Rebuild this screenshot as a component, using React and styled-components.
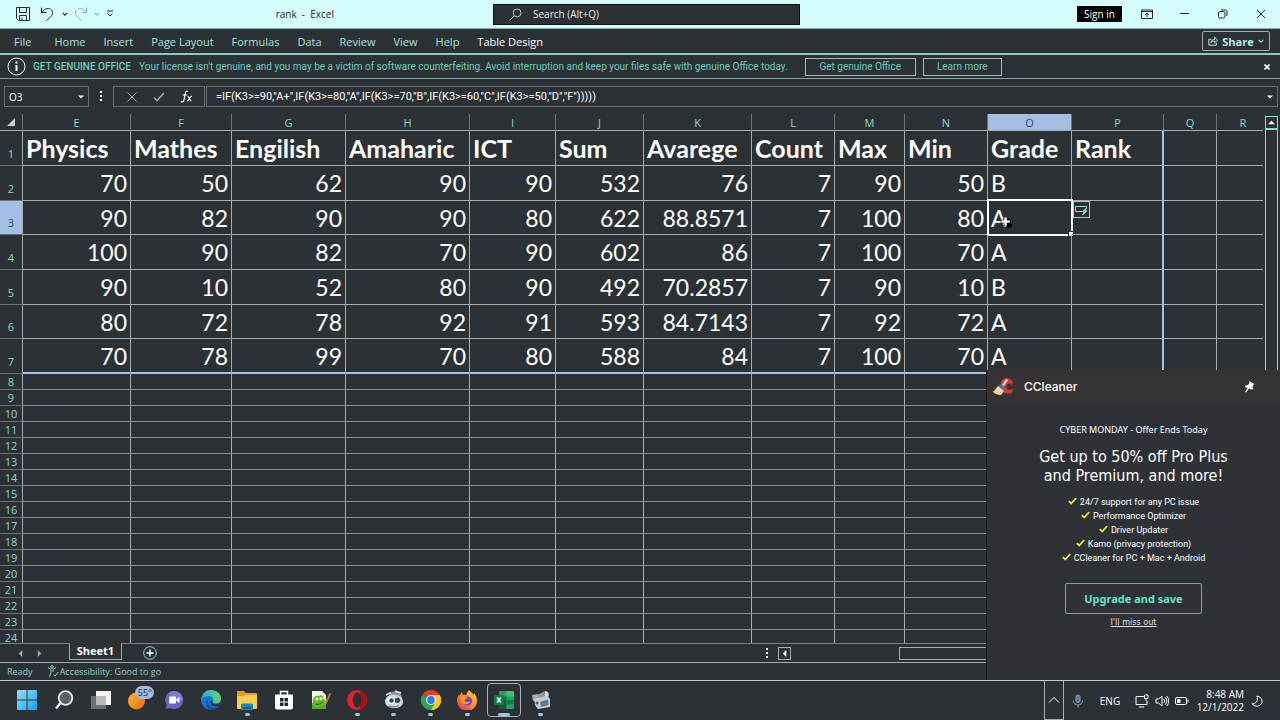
import React from 'react';
import styled, { createGlobalStyle } from 'styled-components';

const mint = '#8fd9c8';
const dark = '#2c3136';
const line = '#a4acae';
const accent = '#a3c0e4';

const GlobalStyle = createGlobalStyle`
  * {
    box-sizing: border-box;
  }
  body {
    margin: 0;
    background: ${dark};
    color: #fff;
    font-family: 'Open Sans', 'Noto Sans', sans-serif;
    font-size: 11px;
  }
  button, input {
    font: inherit;
    color: inherit;
    background: none;
    border: 0;
    padding: 0;
    margin: 0;
    border-radius: 0;
  }
  button {
    display: flex;
    align-items: center;
    justify-content: center;
  }
`;

const Window = styled.div`
  height: 100vh;
  display: flex;
  flex-direction: column;
  overflow: hidden;
`;

/* ---------- title bar ---------- */

const TitleBar = styled.header`
  flex: none;
  height: 29px;
  display: grid;
  grid-template-columns: 493fr 307px 480fr;
  align-items: center;
  background: #d6fdfd;
  border-bottom: 1px solid #7fb5ae;
  color: #23282c;

  .TitleBar__side {
    display: flex;
    align-items: center;
    height: 100%;
  }
  .TitleBar__side--right {
    justify-content: flex-end;
  }
`;

const QuickAccess = styled.div`
  display: flex;
  align-items: center;
  padding-left: 15px;
  flex: 1;
`;

const QuickButton = styled.button`
  width: ${({ $width }) => $width}px;
  height: 20px;
  opacity: ${({ $faded }) => ($faded ? 0.35 : 1)};
`;

const DocTitle = styled.span`
  padding-right: 159px;
  font-size: 10px;
  white-space: pre;
`;

const SearchBox = styled.label`
  display: flex;
  align-items: center;
  height: 21px;
  padding-left: 15px;
  gap: 11px;
  background: ${dark};
  border: 1px solid #111;
  color: #e8eaea;

  input {
    flex: 1;
    min-width: 0;
    font-size: 10px;
    outline: 0;
  }
  input::placeholder {
    color: #e8eaea;
    opacity: 1;
  }
`;

const SignIn = styled.button`
  width: 45px;
  height: 16px;
  margin-right: 6px;
  background: #000;
  color: #fff;
  font-size: 10px;
`;

const WindowButton = styled.button`
  width: 38px;
  height: 28px;
`;

/* ---------- ribbon ---------- */

const Ribbon = styled.nav`
  flex: none;
  height: 26px;
  display: flex;
  align-items: center;
  gap: 18px;
  padding: 0 10px 0 14px;
  border-bottom: 2px solid #8fc9be;
`;

const RibbonTab = styled.button`
  height: 22px;
  color: ${({ $active }) => ($active ? '#fff' : '#a5e3d6')};
  margin-right: ${({ $wide }) => ($wide ? 5 : 0)}px;
`;

const ShareButton = styled.button`
  width: 68px;
  height: 20px;
  gap: 4px;
  margin-left: auto;
  border: 1px solid ${line};
  border-radius: 2px;
  color: #b5efe2;
  font-weight: 700;
`;

const Notice = styled.section`
  flex: none;
  height: 24px;
  display: flex;
  align-items: center;
  padding: 0 8px 0 7px;
  border-bottom: 1px solid #74a79f;
  color: #6cccb9;
  font-family: Roboto, sans-serif;
  font-size: 10px;
  white-space: nowrap;

  strong {
    font-weight: 500;
    margin: 0 8px 0 7px;
  }
  p {
    margin: 0 17px 0 0;
  }
`;

const NoticeButton = styled.button`
  width: ${({ $width }) => $width}px;
  height: 18px;
  margin-right: 7px;
  border: 1px solid #b0b6b8;
`;

const NoticeClose = styled.button`
  width: 10px;
  height: 18px;
  margin-left: auto;
`;

/* ---------- formula bar ---------- */

const FormulaBar = styled.div`
  flex: none;
  height: 35px;
  display: flex;
  align-items: flex-start;
  padding: 7px 2px 0 4px;
  font-size: 10px;
`;

const BarBox = styled.div`
  display: flex;
  align-items: center;
  height: 21px;
  min-width: 0;
  width: ${({ $width }) => ($width ? `${$width}px` : 'auto')};
  flex: ${({ $width }) => ($width ? 'none' : '1')};
  margin-right: ${({ $gap }) => $gap || 0}px;
  padding: 0 4px;
  border: 1px solid #666b6f;

  input {
    flex: 1;
    min-width: 0;
    outline: 0;
  }
`;

const FormulaInput = styled.input`
  padding-left: 5px;
  font-family: Roboto, sans-serif;
  font-size: 11px;
`;

const FormulaButton = styled.button`
  flex: 1;
  height: 19px;
  color: ${({ $muted }) => ($muted ? '#a5a9ab' : '#fff')};
`;

const Grip = styled.span`
  width: 24px;
  height: 21px;
  display: flex;
  align-items: center;
  justify-content: center;
`;

/* ---------- sheet ---------- */

const SheetArea = styled.main`
  flex: 1;
  min-height: 0;
  display: flex;
  overflow: hidden;
`;

const SheetClip = styled.div`
  flex: 1;
  min-width: 0;
  overflow: hidden;
`;

const Sheet = styled.table`
  width: 0;
  min-width: 100%;
  table-layout: fixed;
  border-collapse: separate;
  border-spacing: 0;
`;

const ColumnHead = styled.th`
  height: 17px;
  padding: 1px 0 0;
  line-height: 15px;
  font-size: 11px;
  font-weight: 400;
  color: ${({ $selected }) => ($selected ? '#2f4664' : mint)};
  background: ${({ $selected }) => ($selected ? accent : 'none')};
  border-right: 1px solid #6b7175;
  border-bottom: 1px solid ${line};
`;

const RowHead = styled.th`
  padding: 0 0 ${({ $height }) => ($height > 20 ? 4 : 0)}px;
  height: ${({ $height }) => $height}px;
  line-height: 14px;
  font-size: 11px;
  font-weight: 400;
  vertical-align: bottom;
  color: ${({ $selected }) => ($selected ? '#2f4664' : mint)};
  background: ${({ $selected }) => ($selected ? accent : 'none')};
  border-right: 1px solid ${line};
  border-bottom: 1px solid #6b7175;
`;

const Cell = styled.td`
  position: relative;
  padding: 0 3px;
  overflow: visible;
  line-height: 30px;
  font-family: Lato, sans-serif;
  font-size: ${({ $bold }) => ($bold ? 25 : 23)}px;
  font-weight: ${({ $bold }) => ($bold ? 700 : 400)};
  text-align: ${({ $number }) => ($number ? 'right' : 'left')};
  white-space: nowrap;
  border-right: ${({ $tableRight }) => ($tableRight ? `2px solid ${accent}` : `1px solid ${line}`)};
  border-bottom: ${({ $tableBottom }) => ($tableBottom ? `2px solid ${accent}` : `1px solid ${line}`)};
`;

const BlankCell = styled.td`
  padding: 0;
  border-right: 1px solid ${line};
  border-bottom: 1px solid #888f92;
`;

const Selection = styled.span`
  position: absolute;
  inset: -2px -2px -2px -1px;
  border: 2px solid #fff;
  pointer-events: none;

  &::after {
    content: '';
    position: absolute;
    right: -3px;
    bottom: -3px;
    width: 4px;
    height: 4px;
    background: #fff;
    border: 1px solid ${dark};
  }
`;

const QuickAnalysis = styled.button`
  position: absolute;
  left: 100%;
  top: 0;
  width: 17px;
  height: 17px;
  margin-left: 2px;
  border: 1px solid ${mint};
  background: ${dark};
`;

const Cursor = styled.svg`
  position: absolute;
  left: 12px;
  top: 15px;
`;

const VerticalScroll = styled.div`
  flex: none;
  width: 13px;
  margin: 2px 2px 0;
  display: flex;
  flex-direction: column;

  button {
    height: 13px;
    border: 1px solid ${mint};
  }
  div {
    flex: 1;
    border: 1px solid ${mint};
  }
`;

/* ---------- sheet tabs and status ---------- */

const TabStrip = styled.div`
  flex: none;
  height: 20px;
  display: flex;
  align-items: flex-start;
  border-top: 1px solid #7b8286;
  border-bottom: 1px solid ${line};
`;

const TabArrows = styled.div`
  width: 69px;
  height: 18px;
  display: flex;
  align-items: center;
  gap: 12px;
  padding-left: 17px;
  color: #a5a9ab;
`;

const SheetTab = styled.button`
  width: 53px;
  height: 17px;
  margin-top: -1px;
  padding-bottom: 2px;
  background: ${dark};
  border: 1px solid #8fa9c4;
  border-top: 0;
  font-weight: 700;
`;

const AddSheet = styled.button`
  height: 18px;
  margin-left: 21px;
`;

const HorizontalScroll = styled.div`
  display: flex;
  align-items: center;
  height: 18px;
  margin-left: auto;
  width: 514px;
  gap: 9px;

  button {
    width: 13px;
    height: 13px;
    border: 1px solid ${line};
  }
  div {
    height: 13px;
    flex: 1;
    margin: 0 20px 0 99px;
    border: 1px solid ${line};
  }
`;

const StatusBar = styled.footer`
  flex: none;
  height: 18px;
  display: flex;
  align-items: center;
  padding: 0 0 1px 7px;
  border-bottom: 1px solid #c5cacb;
  color: #8fd0c2;
  font-size: 9px;

  svg {
    margin: 0 1px 0 14px;
  }
`;

/* ---------- taskbar ---------- */

const Taskbar = styled.div`
  flex: none;
  height: 39px;
  display: flex;
  justify-content: space-between;
`;

const Apps = styled.div`
  width: 550px;
  margin-left: 9px;
  padding-bottom: 2px;
  display: grid;
  grid-template-columns: repeat(15, 1fr);
  align-items: center;
  justify-items: center;
`;

const AppButton = styled.button`
  position: relative;
  width: 34px;
  height: 34px;
  border: 1px solid ${({ $active }) => ($active ? '#a9afb2' : 'transparent')};
  border-radius: 4px;

  &::after {
    content: '';
    display: ${({ $running }) => ($running ? 'block' : 'none')};
    position: absolute;
    bottom: 0;
    width: ${({ $active }) => ($active ? 12 : 5)}px;
    height: 3px;
    border-radius: 2px;
    background: #a9bfdc;
  }
`;

const Temperature = styled.span`
  position: absolute;
  right: -1px;
  top: 2px;
  width: 19px;
  height: 13px;
  line-height: 13px;
  border-radius: 7px;
  background: #9dbbe0;
  color: #1d2b45;
  font-size: 9px;
`;

const Tray = styled.div`
  display: flex;
  align-items: center;
  padding-right: 17px;
`;

const TrayToggle = styled.button`
  width: 20px;
  height: 100%;
  margin-right: 7px;
  border: 1px solid ${line};
  border-top: 0;
`;

const TrayItem = styled.button`
  width: ${({ $width }) => $width}px;
  height: 30px;
  font-size: 10px;
`;

const Clock = styled.time`
  width: 55px;
  font-size: 10px;
  line-height: 13px;
  text-align: right;
  margin-right: 7px;
`;

/* ---------- CCleaner offer ---------- */

const Offer = styled.aside`
  position: absolute;
  right: 0;
  bottom: 40px;
  width: 294px;
  height: 310px;
  background: #2e3237;
  border-left: 1px solid #14181a;
  text-align: center;
  font-family: 'DejaVu Sans Condensed', 'Noto Sans', sans-serif;
  font-size: 9px;
`;

const OfferHeader = styled.header`
  display: flex;
  align-items: center;
  gap: 9px;
  height: 33px;
  padding: 0 25px 0 6px;
  background: #373334;
  font-family: Inter, sans-serif;
  font-size: 12px;
  font-weight: 500;

  button {
    margin-left: auto;
  }
`;

const OfferLead = styled.p`
  margin: 20px 0 0;
  font-family: 'Noto Sans', sans-serif;
  line-height: 14px;
`;

const OfferTitle = styled.h2`
  margin: 10px 0;
  font-size: 16px;
  line-height: 19px;
  font-weight: 400;
`;

const OfferList = styled.ul`
  margin: 0;
  padding: 0;
  list-style: none;
  font-family: Roboto, sans-serif;
  line-height: 14px;

  svg {
    margin-right: 3px;
  }
`;

const UpgradeButton = styled.button`
  width: 137px;
  height: 31px;
  margin: 18px auto 0;
  border: 1px solid #62ad9f;
  border-radius: 2px;
  color: #63e3c8;
  font-family: 'Noto Sans', sans-serif;
  font-size: 11px;
  font-weight: 700;
`;

const MissOut = styled.a`
  color: #e8dfe6;
  line-height: 16px;
`;

/* ---------- icons ---------- */

const Stroke = ({ size = 16, box = 16, width = 1, children }) => (
  <svg width={size} height={size} viewBox={`0 0 ${box} ${box}`} fill='none' stroke='currentColor' strokeWidth={width}>
    {children}
  </svg>
);

const Caret = ({ size = 6 }) => (
  <Stroke size={size} box={8} width={1.5}>
    <path d='M1 2.5l3 3 3-3' />
  </Stroke>
);

const Triangle = ({ d, size = 8 }) => (
  <svg width={size} height={size} viewBox='0 0 8 8' fill='currentColor'>
    <path d={d} />
  </svg>
);

const Dots = () => (
  <svg width='3' height='11' viewBox='0 0 3 11' fill='#fff'>
    <path d='M0 0h2v2H0zM0 4h2v2H0zM0 8h2v2H0z' />
  </svg>
);

const Tick = () => (
  <svg width='9' height='8' viewBox='0 0 9 8' fill='none' stroke='#f3e52c' strokeWidth='1.8'>
    <path d='M.8 4.2l2.4 2.3L8.2 1' />
  </svg>
);

const appIcons = {
  start: (
    <svg width='20' height='20' viewBox='0 0 20 20'>
      <defs>
        <linearGradient id='win' x1='0' y1='0' x2='1' y2='1'>
          <stop offset='0' stopColor='#8fe4fb' />
          <stop offset='1' stopColor='#1c9be8' />
        </linearGradient>
      </defs>
      <path fill='url(#win)' d='M1 0h8.5v9.5H0V1a1 1 0 011-1zM10.500 0H19a1 1 0 011 1v8.500h-9.500zM0 10.500h9.500V20H1a1 1 0 01-1-1zM10.500 10.500H20V19a1 1 0 01-1 1h-8.500z' />
    </svg>
  ),
  search: (
    <svg width='20' height='20' viewBox='0 0 20 20' fill='#5b6065' stroke='#e6e8e9' strokeWidth='1.800'>
      <circle cx='11.500' cy='8' r='6.800' />
      <path d='M6.500 13L2 18.500' strokeWidth='2.400' />
    </svg>
  ),
  tasks: (
    <svg width='20' height='20' viewBox='0 0 20 20'>
      <rect x='5' y='1' width='15' height='14' fill='#f4f4f4' />
      <rect x='0' y='6' width='15' height='13' fill='#6f7173' />
      <path d='M5 6h10v9H5z' fill='#b9babb' />
    </svg>
  ),
  weather: (
    <svg width='20' height='20' viewBox='0 0 20 20'>
      <defs>
        <linearGradient id='sun' x1='0' y1='0' x2='1' y2='1'>
          <stop offset='0' stopColor='#fdb52f' />
          <stop offset='1' stopColor='#ec6a13' />
        </linearGradient>
      </defs>
      <circle cx='9.500' cy='11' r='8.500' fill='url(#sun)' />
    </svg>
  ),
  chat: (
    <svg width='20' height='20' viewBox='0 0 20 20'>
      <path d='M10 1a9 9 0 11-4 17l-4.500 1 1.200-4A9 9 0 0110 1z' fill='#6a62c4' />
      <path d='M10 1a9 9 0 019 9c-6 2-13-1-14-7a9 9 0 015-2z' fill='#8379d8' />
      <rect x='5' y='6.500' width='7' height='7' rx='1' fill='#fff' />
      <path d='M12.500 9l3-2v6l-3-2z' fill='#fff' />
    </svg>
  ),
  edge: (
    <svg width='20' height='20' viewBox='0 0 20 20'>
      <defs>
        <linearGradient id='edge' x1='0' y1='0' x2='1' y2='0'>
          <stop offset='0' stopColor='#29a7e8' />
          <stop offset='1' stopColor='#62d957' />
        </linearGradient>
      </defs>
      <circle cx='10' cy='10' r='10' fill='#1b74cf' />
      <path d='M0 10C1 3 5 0 10 0c6 0 10 4 10 8.500 0 3-2.500 4.800-5.500 4.800-2 0-3.300-.8-2.500-2C13.500 8 10 5.600 7 6 3.500 6.300 1 8 0 10z' fill='url(#edge)' />
      <path d='M7.500 9c-2 4 1 8.500 5.500 8.500 2 0 3.800-.5 5.200-1.600C16 19 13 20 10.500 20 5.500 19.500 3.500 13 7.500 9z' fill='#14509f' />
      <path d='M11.800 11.200c-1 1.500.4 3.100 3.200 3.100 2 0 3.300-.6 4.300-1.500-.4 1.400-.8 2.200-1.500 3-5 2-9.600-1.200-8-5z' fill='#2c3136' />
    </svg>
  ),
  explorer: (
    <svg width='22' height='20' viewBox='0 0 22 20'>
      <path d='M1 2a1 1 0 011-1h6l2 2h10a1 1 0 011 1v4H1z' fill='#e0a21d' />
      <path d='M1 6l7-.1L10 5h11v13a1 1 0 01-1 1H2a1 1 0 01-1-1z' fill='#fbcd4c' />
      <path d='M5 20v-5a1.500 1.500 0 011.500-1.500h9A1.500 1.500 0 0117 15v5z' fill='#1f7fc9' />
      <path d='M7 17h8v2H7z' fill='#125a9c' />
    </svg>
  ),
  store: (
    <svg width='20' height='20' viewBox='0 0 20 20'>
      <path d='M6.500 5V1.500h7V5' fill='none' stroke='#fff' strokeWidth='1.500' />
      <path d='M1 4.500h18V17a2.500 2.500 0 01-2.500 2.500h-13A2.500 2.500 0 011 17z' fill='#fff' />
      <path d='M6 8h3.500v3.500H6zM10.500 8H14v3.500h-3.500zM6 12.500h3.500V16H6zM10.500 12.500H14V16h-3.500z' fill='#24292d' />
    </svg>
  ),
  notepad: (
    <svg width='20' height='20' viewBox='0 0 20 20'>
      <path d='M1 1h10l4 4v14H1z' fill='#f3f6ee' />
      <path d='M1 13h14v6H1z' fill='#4fae2a' />
      <path d='M2 10c0-3 3-5 6-4 2-2 5 0 4 2l2 2c2 4-2 7-6 7-4 1-6-1-6-3z' fill='#62b92b' />
      <circle cx='6' cy='9' r='1.500' fill='#e9f7d8' />
      <circle cx='10' cy='8.500' r='1.500' fill='#e9f7d8' />
      <path d='M4 14c3 1 6 0 8-2' stroke='#1e5e15' fill='none' />
      <path d='M18.500 3l-5 11-1 3 2.500-2 5-11z' fill='#b78632' />
    </svg>
  ),
  opera: (
    <svg width='20' height='20' viewBox='0 0 20 20'>
      <circle cx='10' cy='10' r='10' fill='#e2202c' />
      <path d='M14 1a10 10 0 010 18c-3-2-4-16 0-18z' fill='#a80f1a' />
      <ellipse cx='10' cy='10' rx='4.200' ry='7.500' fill='#2c3136' />
    </svg>
  ),
  robot: (
    <svg width='20' height='20' viewBox='0 0 20 20'>
      <path d='M5 6c0-5 9-6 12-2l1 4H4z' fill='#8e989f' />
      <path d='M1 11c1-5 5-7 10-6 5 0 8 3 8 7 0 4-4 6-9 6-6 0-9-3-9-7z' fill='#cfd8de' />
      <circle cx='7' cy='10.500' r='3.600' fill='#f1f6f8' />
      <circle cx='7.500' cy='10.500' r='2.200' fill='#2e4658' />
      <path d='M11 8.500l4-1 1.500 2.500-1.500 3-4-.5z' fill='#33495a' />
      <path d='M2 5l5-2.500M11 1l6 2' stroke='#e4e9eb' strokeWidth='1.500' />
      <path d='M5 16c3 1.200 7 1.200 10-.5' stroke='#6b7880' fill='none' />
    </svg>
  ),
  chrome: (
    <svg width='20' height='20' viewBox='0 0 20 20'>
      <path d='M10 10L1.340 5A10 10 0 0118.660 5z' fill='#e33b2e' />
      <path d='M10 10l8.660-5A10 10 0 0110 20z' fill='#fbc916' />
      <path d='M10 10v10A10 10 0 011.340 5z' fill='#2da44e' />
      <path d='M10 5h8.660A10 10 0 0110 20l4.330-7.500z' fill='#fbc916' />
      <path d='M5.670 12.500L1.340 5A10 10 0 0010 20l4.330-7.500z' fill='#2da44e' />
      <circle cx='10' cy='10' r='5' fill='#fff' />
      <circle cx='10' cy='10' r='3.900' fill='#2f7de1' />
    </svg>
  ),
  firefox: (
    <svg width='20' height='20' viewBox='0 0 20 20'>
      <defs>
        <linearGradient id='fox' x1='1' y1='0' x2='0' y2='1'>
          <stop offset='0' stopColor='#ffe13a' />
          <stop offset='.5' stopColor='#ff8a22' />
          <stop offset='1' stopColor='#ee2b62' />
        </linearGradient>
      </defs>
      <path d='M12 0c1 2 3.500 2.500 4.500 5l.5-2c2 2.500 3 5 3 7.500A10 10 0 010 11c0-3 1-5 2-6.500l.5 1.200L4.500 2l1.700 3c1.500-.6 2.500-.2 3.300-.1C9.800 3 11 1 12 0z' fill='url(#fox)' />
      <circle cx='10.500' cy='11' r='4.600' fill='#7a3fd0' />
      <path d='M4.500 7c2-1 4 .2 6 .8-.6 1.500-2.500 1.200-3 2.700 1 2 4.500 2 6 .3-.5 4-7.500 5-9.500.2z' fill='#ff9a2a' />
    </svg>
  ),
  excel: (
    <svg width='20' height='20' viewBox='0 0 20 20'>
      <rect x='5' y='1' width='15' height='18' rx='1.200' fill='#21a366' />
      <path d='M12.500 1H19a1 1 0 011 1v4.500h-7.500z' fill='#33c481' />
      <path d='M5 10h7.500v9H6a1 1 0 01-1-1z' fill='#185c37' />
      <path d='M12.500 10H20v4.500h-7.500zM5 6.500h7.500V10H5z' fill='#107c41' />
      <rect x='0' y='5' width='10' height='10' rx='1' fill='#107c41' />
      <path d='M3 7.500l4 5M7 7.500l-4 5' stroke='#fff' strokeWidth='1.400' />
    </svg>
  ),
  camcorder: (
    <svg width='20' height='20' viewBox='0 0 20 20'>
      <path d='M6 5l8-4 4 2v6L7 11z' fill='#8f979b' />
      <path d='M1 5l6-1 1 5-6 2z' fill='#a7adb0' />
      <path d='M3 9l13-3 3 3v8l-12 2-3-4z' fill='#c9ccce' />
      <path d='M9 12l8-2.500.500 5.500L10 17z' fill='#5877a0' />
      <path d='M14 1l3 1v4l-3 1z' fill='#d9dcdd' />
      <circle cx='6' cy='13' r='1.600' fill='#50575b' />
    </svg>
  ),
};

/* ---------- data ---------- */

const ribbonTabs = ['File', 'Home', 'Insert', 'Page Layout', 'Formulas', 'Data', 'Review', 'View', 'Help', 'Table Design'];

const columns = [
  { letter: 'E', width: 108 },
  { letter: 'F', width: 101 },
  { letter: 'G', width: 114 },
  { letter: 'H', width: 124 },
  { letter: 'I', width: 86 },
  { letter: 'J', width: 88 },
  { letter: 'K', width: 108 },
  { letter: 'L', width: 83 },
  { letter: 'M', width: 70 },
  { letter: 'N', width: 83 },
  { letter: 'O', width: 84 },
  { letter: 'P', width: 92 },
  { letter: 'Q', width: 53 },
  { letter: 'R', width: 53 },
];

const rows = [
  ['Physics', 'Mathes', 'Engilish', 'Amaharic', 'ICT', 'Sum', 'Avarege', 'Count', 'Max', 'Min', 'Grade', 'Rank', '', ''],
  [70, 50, 62, 90, 90, 532, 76, 7, 90, 50, 'B', '', '', ''],
  [90, 82, 90, 90, 80, 622, 88.8571, 7, 100, 80, 'A', '', '', ''],
  [100, 90, 82, 70, 90, 602, 86, 7, 100, 70, 'A', '', '', ''],
  [90, 10, 52, 80, 90, 492, 70.2857, 7, 90, 10, 'B', '', '', ''],
  [80, 72, 78, 92, 91, 593, 84.7143, 7, 92, 72, 'A', '', '', ''],
  [70, 78, 99, 70, 80, 588, 84, 7, 100, 70, 'A', '', '', ''],
];

const blankRows = Array.from({ length: 17 }, (_, i) => i + 8);

const apps = [
  { id: 'start', label: 'Start' },
  { id: 'search', label: 'Search' },
  { id: 'tasks', label: 'Task View' },
  { id: 'weather', label: 'Weather' },
  { id: 'chat', label: 'Chat' },
  { id: 'edge', label: 'Microsoft Edge' },
  { id: 'explorer', label: 'File Explorer', running: true },
  { id: 'store', label: 'Microsoft Store' },
  { id: 'notepad', label: 'Notepad++' },
  { id: 'opera', label: 'Opera', running: true },
  { id: 'robot', label: 'Assistant', running: true },
  { id: 'chrome', label: 'Google Chrome', running: true },
  { id: 'firefox', label: 'Firefox', running: true },
  { id: 'excel', label: 'Excel', running: true, active: true },
  { id: 'camcorder', label: 'Recorder', running: true },
];

const perks = [
  '24/7 support for any PC issue',
  'Performance Optimizer',
  'Driver Updater',
  'Kamo (privacy protection)',
  'CCleaner for PC + Mac + Android',
];

/* ---------- parts ---------- */

function TopBar() {
  return (
    <TitleBar>
      <div className='TitleBar__side'>
        <QuickAccess>
          <QuickButton $width={16} aria-label='Save'>
            <Stroke>
              <path d='M1.500 1.500h13v13h-11l-2-2zM4.500 1.500v5h7v-5M4.500 14.500v-5h7v5M7 11.500v3' />
            </Stroke>
          </QuickButton>
          <QuickButton $width={31} aria-label='Undo'>
            <Stroke>
              <path d='M2.500 1.500v5h5M2.800 6.200C6 2 10.500 1.500 12.500 4s1 5-1 7l-4 3.500' />
            </Stroke>
          </QuickButton>
          <QuickButton $width={6} aria-label='Undo history'>
            <Caret />
          </QuickButton>
          <QuickButton $width={26} $faded aria-label='Redo'>
            <Stroke>
              <path d='M13.500 1.500v5h-5M13.200 6.200C10 2 5.500 1.500 3.500 4s-1 5 1 7l4 3.500' />
            </Stroke>
          </QuickButton>
          <QuickButton $width={6} $faded aria-label='Redo history'>
            <Caret />
          </QuickButton>
          <QuickButton $width={20} aria-label='Customize Quick Access Toolbar'>
            <Stroke size={8} box={8}>
              <path d='M1 1h6M1.500 3.500L4 6l2.500-2.500' />
            </Stroke>
          </QuickButton>
        </QuickAccess>
        <DocTitle>rank  -  Excel</DocTitle>
      </div>
      <SearchBox>
        <Stroke size={13}>
          <circle cx='10' cy='6' r='4.800' />
          <path d='M6.500 9.500L1 15' />
        </Stroke>
        <input type='text' placeholder='Search (Alt+Q)' aria-label='Search' />
      </SearchBox>
      <div className='TitleBar__side TitleBar__side--right'>
        <SignIn>Sign in</SignIn>
        <WindowButton aria-label='Ribbon Display Options'>
          <Stroke size={12} box={12}>
            <path d='M.5 2h11v8.500H.5zM.5 3.500h11M6 9V5M4 7l2-2 2 2' />
          </Stroke>
        </WindowButton>
        <WindowButton aria-label='Minimize'>
          <Stroke size={10} box={10}>
            <path d='M0 4.500h9' />
          </Stroke>
        </WindowButton>
        <WindowButton aria-label='Restore'>
          <Stroke size={10} box={10}>
            <rect x='.5' y='2.500' width='6.500' height='6.500' rx='1.500' />
            <path d='M3 1h4.500A1.500 1.500 0 019 2.500V7' />
          </Stroke>
        </WindowButton>
        <WindowButton aria-label='Close'>
          <Stroke size={10} box={10}>
            <path d='M1 1l8 8M9 1L1 9' />
          </Stroke>
        </WindowButton>
      </div>
    </TitleBar>
  );
}

function SheetRow({ cells, index }) {
  const isHeader = index === 0;
  return (
    <tr>
      <RowHead scope='row' $height={index % 3 === 2 ? 34 : 35} $selected={index === 2}>
        {index + 1}
      </RowHead>
      {cells.map((value, i) => (
        <Cell
          key={columns[i].letter}
          $bold={isHeader}
          $number={typeof value === 'number'}
          $tableRight={i === 11}
          $tableBottom={index === 6 && i < 12}
        >
          {value}
          {index === 2 && i === 10 && (
            <>
              <Selection />
              <QuickAnalysis aria-label='Quick Analysis'>
                <svg width='15' height='15' viewBox='0 0 15 15' fill='none' stroke={mint}>
                  <path d='M8 9.500H1.500v-5h11V6' />
                  <path d='M12.500 6l-4 3.500h2L8.500 13l4.500-4h-2z' fill={mint} />
                </svg>
              </QuickAnalysis>
              <Cursor width='12' height='12' viewBox='0 0 12 12'>
                <path d='M4.500 4.500H9v5h3M8 9v3' stroke='#000' strokeWidth='3' fill='none' />
                <path d='M4 1h3v3h3v3H7v3H4V7H1V4h3z' fill='#fff' stroke='#000' strokeWidth='.6' />
              </Cursor>
            </>
          )}
        </Cell>
      ))}
    </tr>
  );
}

function Workbook() {
  return (
    <SheetArea>
      <SheetClip>
        <Sheet>
          <colgroup>
            <col width='23' />
            {columns.map(({ letter, width }) => (
              <col key={letter} width={width} />
            ))}
          </colgroup>
          <thead>
            <tr>
              <ColumnHead aria-label='Select all'>
                <svg width='10' height='10' viewBox='0 0 10 10' fill='#c9cdcf'>
                  <path d='M9 1v8H1z' />
                </svg>
              </ColumnHead>
              {columns.map(({ letter }) => (
                <ColumnHead key={letter} scope='col' $selected={letter === 'O'}>
                  {letter}
                </ColumnHead>
              ))}
            </tr>
          </thead>
          <tbody>
            {rows.map((cells, index) => (
              <SheetRow key={index} cells={cells} index={index} />
            ))}
            {blankRows.map((number) => (
              <tr key={number}>
                <RowHead scope='row' $height={16}>
                  {number}
                </RowHead>
                {columns.map(({ letter }) => (
                  <BlankCell key={letter} />
                ))}
              </tr>
            ))}
          </tbody>
        </Sheet>
      </SheetClip>
      <VerticalScroll>
        <button aria-label='Scroll up'>
          <Triangle size={7} d='M0 6l4-4 4 4z' />
        </button>
        <div />
      </VerticalScroll>
    </SheetArea>
  );
}

function CCleanerOffer() {
  return (
    <Offer>
      <OfferHeader>
        <svg width='22' height='20' viewBox='0 0 22 20'>
          <path d='M20 5C17-.5 9-.5 8 5.500S9 19 19 16l1-4c-4 2-7 0-6.500-3S17 5.500 19 8z' fill='#d8382b' />
          <path d='M13 2l2 1-4 6-2-1z' fill='#e9ded2' />
          <path d='M7 7l5 3-1 4-6-4z' fill='#3a78b8' />
          <path d='M5 9l6 5-3 4c-3 0-6-1-8-3z' fill='#f0d9a2' />
        </svg>
        CCleaner
        <button aria-label='Pin'>
          <svg width='11' height='12' viewBox='0 0 11 12' fill='#fff'>
            <path d='M5 0l5.500 3-1.500 1-.5 2.500L9.500 8 7 8.500 5 7.500 2 11.500 1 11l2.500-4L1 6l.5-1.500L4 4l1.500-2z' />
          </svg>
        </button>
      </OfferHeader>
      <OfferLead>CYBER MONDAY - Offer Ends Today</OfferLead>
      <OfferTitle>
        Get up to 50% off Pro Plus
        <br />
        and Premium, and more!
      </OfferTitle>
      <OfferList>
        {perks.map((perk) => (
          <li key={perk}>
            <Tick />
            {perk}
          </li>
        ))}
      </OfferList>
      <UpgradeButton>Upgrade and save</UpgradeButton>
      <MissOut href='#later'>I&apos;ll miss out</MissOut>
    </Offer>
  );
}

function SystemTray() {
  return (
    <Tray>
      <TrayToggle aria-label='Show hidden icons'>
        <Stroke size={12} box={12}>
          <path d='M1 8.500l5-5 5 5' />
        </Stroke>
      </TrayToggle>
      <TrayItem $width={14} aria-label='Microphone'>
        <svg width='14' height='14' viewBox='0 0 14 14' fill='none' stroke='#8fa5ba'>
          <rect x='5' y='1' width='4' height='7.500' rx='2' fill='#56708a' />
          <path d='M2.500 6.500c0 6 9 6 9 0M7 11v2.500' />
        </svg>
      </TrayItem>
      <TrayItem $width={50}>ENG</TrayItem>
      <TrayItem $width={14} aria-label='Network'>
        <Stroke size={14} box={14}>
          <path d='M9 2.500H1v8h11V7M4 13h5M9.500 1h3.500v3.500H9.500zM11 4.500V7' />
        </Stroke>
      </TrayItem>
      <TrayItem $width={26} aria-label='Volume'>
        <Stroke size={14} box={14}>
          <path d='M1 5h2.500L7 2v10L3.500 9H1zM8.800 5c1 1 1 3 0 4M10.300 3.500c2 2 2 5 0 7M11.800 2c2.500 3 2.500 7 0 10' />
        </Stroke>
      </TrayItem>
      <TrayItem $width={14} aria-label='Battery'>
        <Stroke size={14} box={14}>
          <rect x='.5' y='3.500' width='11' height='7' rx='1.500' />
          <path d='M13 5.500v3' />
          <path d='M2.500 5.500h2.500v3H2.500z' fill='currentColor' />
        </Stroke>
      </TrayItem>
      <Clock>
        8:48 AM
        <br />
        12/1/2022
      </Clock>
      <TrayItem $width={12} aria-label='Focus assist'>
        <Stroke size={12} box={12}>
          <path d='M6 1c5 1 6.500 6 3.500 8.800C7 12 3 11.500 1 8.800 5 9 7.500 5.500 6 1z' />
        </Stroke>
      </TrayItem>
    </Tray>
  );
}

function App() {
  return (
    <Window>
      <GlobalStyle />
      <TopBar />
      <Ribbon>
        {ribbonTabs.map((tab) => (
          <RibbonTab key={tab} $active={tab === 'Table Design'} $wide={tab === 'File'}>
            {tab}
          </RibbonTab>
        ))}
        <ShareButton>
          <Stroke size={10} box={12} width={1.2}>
            <path d='M4 4H1v7h9V8M3.500 8C4 5 6 4 8 4V1.500L11.500 5 8 8V6C6 6 4.500 6.500 3.500 8z' />
          </Stroke>
          Share
          <Caret />
        </ShareButton>
      </Ribbon>
      <Notice>
        <svg width='19' height='19' viewBox='0 0 19 19' fill='none' stroke='#fff'>
          <circle cx='9.500' cy='9.500' r='8.500' />
          <path d='M9.500 8v6M9.500 4.500v2' strokeWidth='2' />
        </svg>
        <strong>GET GENUINE OFFICE</strong>
        <p>
          Your license isn&apos;t genuine, and you may be a victim of software counterfeiting. Avoid interruption and
          keep your files safe with genuine Office today.
        </p>
        <NoticeButton $width={111}>Get genuine Office</NoticeButton>
        <NoticeButton $width={79}>Learn more</NoticeButton>
        <NoticeClose aria-label='Dismiss'>
          <svg width='6' height='6' viewBox='0 0 6 6' stroke='#fff' strokeWidth='1.600'>
            <path d='M.5.5l5 5M5.500.5l-5 5' />
          </svg>
        </NoticeClose>
      </Notice>
      <FormulaBar>
        <BarBox $width={85}>
          <input type='text' aria-label='Name box' defaultValue='O3' />
          <Triangle size={6} d='M0 2h8L4 6z' />
        </BarBox>
        <Grip>
          <Dots />
        </Grip>
        <BarBox $width={92} $gap={1}>
          <FormulaButton $muted aria-label='Cancel'>
            <Stroke size={10} box={10}>
              <path d='M.5.5l9 9M9.500.5l-9 9' />
            </Stroke>
          </FormulaButton>
          <FormulaButton $muted aria-label='Enter'>
            <Stroke size={12} box={12} width={1.6}>
              <path d='M1 6.500l3 3L11 2' />
            </Stroke>
          </FormulaButton>
          <FormulaButton aria-label='Insert function'>
            <Stroke size={13} box={13} width={1.2}>
              <path d='M8 1.500C6 0 5.500 2 5 4.500L4 10c-.4 2-1.500 2.500-3 1.500M2.500 5H7M7.500 6c1.500 0 2 5 4 5M12 6c-2 0-3 5-5 5' />
            </Stroke>
          </FormulaButton>
        </BarBox>
        <BarBox>
          <FormulaInput
            type='text'
            aria-label='Formula bar'
            defaultValue='=IF(K3>=90,"A+",IF(K3>=80,"A",IF(K3>=70,"B",IF(K3>=60,"C",IF(K3>=50,"D","F")))))'
          />
          <Triangle size={6} d='M0 2h8L4 6z' />
        </BarBox>
      </FormulaBar>
      <Workbook />
      <TabStrip>
        <TabArrows>
          <Triangle size={7} d='M6 0v8L2 4z' />
          <Triangle size={7} d='M2 0v8l4-4z' />
        </TabArrows>
        <SheetTab>Sheet1</SheetTab>
        <AddSheet aria-label='New sheet'>
          <Stroke size={14} box={14}>
            <circle cx='7' cy='7' r='6.300' stroke={mint} />
            <path d='M7 3.500v7M3.500 7h7' strokeWidth='1.500' />
          </Stroke>
        </AddSheet>
        <HorizontalScroll>
          <Dots />
          <button aria-label='Scroll left'>
            <Triangle size={7} d='M6 0v8L2 4z' />
          </button>
          <div />
        </HorizontalScroll>
      </TabStrip>
      <StatusBar>
        Ready
        <Stroke size={12} box={12}>
          <circle cx='5' cy='2' r='1.300' />
          <path d='M1 2.500l3 2v3l-1.500 4M9 2.500l-3 2v2.500M6.500 9.500l1.500 1.500 3.500-4' />
        </Stroke>
        Accessibility: Good to go
      </StatusBar>
      <Taskbar>
        <Apps>
          {apps.map(({ id, label, running, active }) => (
            <AppButton key={id} aria-label={label} $running={running} $active={active}>
              {appIcons[id]}
              {id === 'weather' && <Temperature>55°</Temperature>}
            </AppButton>
          ))}
        </Apps>
        <SystemTray />
      </Taskbar>
      <CCleanerOffer />
    </Window>
  );
}

export default App;
